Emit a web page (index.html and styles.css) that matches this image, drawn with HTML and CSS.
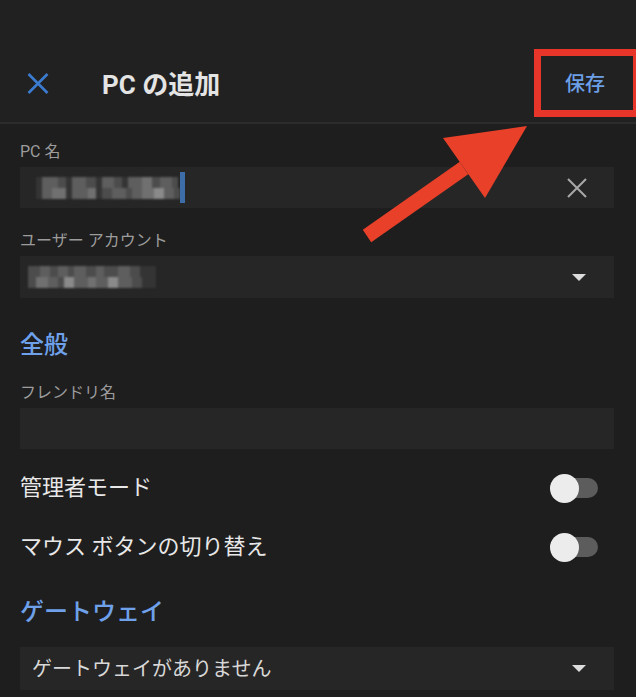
FILE: index.html
```html
<!DOCTYPE html>
<html lang="ja">
<head>
<meta charset="utf-8">
<title>PC の追加</title>
<link rel="stylesheet" href="styles.css">
</head>
<body>
<div class="screen">
  <header class="topbar">
    <button class="close" aria-label="閉じる">
      <svg width="22" height="21" viewBox="0 0 22 21"><path d="M1.5 1 L20.5 20 M20.5 1 L1.5 20" stroke="#3b7bd0" stroke-width="2.6" fill="none"/></svg>
    </button>
    <h1 class="title">PC の追加</h1>
    <button class="save">保存</button>
  </header>

  <main class="form">
    <div class="field first">
      <label class="label">PC 名</label>
      <div class="input">
        <div class="pix">
          <div class="pr">
            <span class="b w6 s1"></span><span class="b w16 s3"></span><span class="b w8 s2"></span><span class="b w6 s1"></span><span class="b w14 s3"></span><span class="b w10 s2"></span><span class="b w6 s1"></span><span class="b w12 s3"></span><span class="b w8 s2"></span><span class="b w6 s1"></span><span class="b w14 s3"></span><span class="b w10 s4"></span><span class="b w8 s2"></span><span class="b w12 s3"></span><span class="b w6 s2"></span>
          </div>
          <div class="pr">
            <span class="b w6 s1"></span><span class="b w10 s3"></span><span class="b w14 s4"></span><span class="b w6 s1"></span><span class="b w16 s3"></span><span class="b w8 s4"></span><span class="b w6 s1"></span><span class="b w10 s2"></span><span class="b w14 s3"></span><span class="b w6 s2"></span><span class="b w10 s3"></span><span class="b w12 s4"></span><span class="b w10 s5"></span><span class="b w10 s3"></span><span class="b w6 s2"></span>
          </div>
        </div>
        <span class="cursor"></span>
        <svg class="clear" width="22" height="22" viewBox="0 0 22 22"><path d="M2 2 L20 20 M20 2 L2 20" stroke="#a8a8a8" stroke-width="2" fill="none"/></svg>
      </div>
    </div>

    <div class="field second">
      <label class="label">ユーザー アカウント</label>
      <div class="input select">
        <div class="pix pix2">
          <div class="pr">
            <span class="b w12 s2"></span><span class="b w10 s3"></span><span class="b w8 s2"></span><span class="b w10 s3"></span><span class="b w6 s2"></span><span class="b w12 s3"></span><span class="b w10 s2"></span><span class="b w8 s3"></span><span class="b w14 s2"></span><span class="b w12 s3"></span><span class="b w10 s2"></span><span class="b w16 s1"></span>
          </div>
          <div class="pr">
            <span class="b w8 s2"></span><span class="b w12 s4"></span><span class="b w10 s3"></span><span class="b w6 s2"></span><span class="b w10 s5"></span><span class="b w14 s3"></span><span class="b w8 s4"></span><span class="b w12 s3"></span><span class="b w10 s5"></span><span class="b w14 s3"></span><span class="b w10 s2"></span><span class="b w14 s1"></span>
          </div>
        </div>
        <span class="caret"></span>
      </div>
    </div>

    <h2 class="section">全般</h2>

    <div class="field tight">
      <label class="label">フレンドリ名</label>
      <div class="input"></div>
    </div>

    <div class="toggles">
      <div class="row">
        <span class="row-text">管理者モード</span>
        <span class="toggle"><span class="track"></span><span class="thumb"></span></span>
      </div>
      <div class="row">
        <span class="row-text">マウス ボタンの切り替え</span>
        <span class="toggle"><span class="track"></span><span class="thumb"></span></span>
      </div>
    </div>

    <h2 class="section gw">ゲートウェイ</h2>

    <div class="input select gw-box">
      <span class="value">ゲートウェイがありません</span>
      <span class="caret"></span>
    </div>
  </main>

  <div class="highlight"></div>
  <svg class="arrow" width="636" height="697" viewBox="0 0 636 697">
    <polygon points="362.8,229.8 459.8,161.8 468.2,174.2 371.2,242.2" fill="#e9402a"/>
    <polygon points="443,138 527,126 485,198" fill="#e9402a"/>
  </svg>
</div>
</body>
</html>
```

FILE: styles.css
```css
* { box-sizing: border-box; }

html, body {
  margin: 0;
  padding: 0;
  background: #1e1e1e;
}

body {
  font-family: Roboto, "Noto Sans CJK JP", sans-serif;
  color: #e6e6e6;
}

.screen {
  position: relative;
  width: 636px;
  height: 697px;
  overflow: hidden;
  background: #1e1e1e;
}

.topbar {
  height: 124px;
  background: #212121;
  border-bottom: 2px solid #2c2c2c;
  display: flex;
  align-items: center;
  padding: 44px 0 0 0;
}

.close {
  background: none;
  border: 0;
  padding: 0;
  margin: 0 0 0 27px;
  width: 22px;
  height: 21px;
  display: flex;
}

.title {
  margin: 4px 0 0 53px;
  font-size: 26px;
  font-weight: 700;
  color: #e4e4e4;
  line-height: 32px;
  flex: 1;
}

.save {
  background: none;
  border: 0;
  padding: 0;
  margin: 0 31px 0 0;
  font-family: "Noto Sans CJK JP", sans-serif;
  font-size: 20px;
  font-weight: 500;
  color: #6c9fe6;
  line-height: 28px;
}

.form {
  padding: 0 22px 0 20px;
}

.field.first { margin-top: 17px; }
.field.second { margin-top: 22px; }
.field.tight { margin-top: 21px; }

.label {
  display: block;
  font-size: 16px;
  line-height: 22px;
  color: #9c9c9c;
  margin-bottom: 4px;
}

.input {
  position: relative;
  height: 41px;
  background: #262626;
  display: flex;
  align-items: center;
}

.select { height: 42px; }

.pix {
  display: flex;
  flex-direction: column;
  margin-left: 16px;
  filter: blur(0.9px);
}

.pr { display: flex; }

.pix2 { margin-left: 8px; }

.b { display: block; height: 11px; }
.w6 { width: 6px; }
.w8 { width: 8px; }
.w10 { width: 10px; }
.w12 { width: 12px; }
.w14 { width: 14px; }
.w16 { width: 16px; }
.s1 { background: #343434; }
.s2 { background: #4c4c4c; }
.s3 { background: #5e5e5e; }
.s4 { background: #707070; }
.s5 { background: #8a8a8a; }

.cursor {
  width: 5px;
  height: 31px;
  background: #3d6ea8;
  margin-left: 0;
  filter: blur(0.5px);
}

.clear {
  margin-left: auto;
  margin-right: 26px;
}

.caret {
  margin-left: auto;
  margin-right: 28px;
  width: 0;
  height: 0;
  border-left: 7px solid transparent;
  border-right: 7px solid transparent;
  border-top: 7px solid #dcdcdc;
}

.section {
  margin: 31px 0 0 0;
  font-size: 24px;
  line-height: 32px;
  font-weight: 500;
  color: #6ea1ea;
}

.toggles { margin-top: 9px; }

.row {
  height: 59px;
  display: flex;
  align-items: center;
  padding-right: 16px;
}

.row-text {
  flex: 1;
  font-size: 22px;
  line-height: 30px;
  color: #e8e8e8;
}

.toggle {
  position: relative;
  width: 48px;
  height: 28px;
  display: flex;
  align-items: center;
}

.track {
  margin-left: 6px;
  width: 42px;
  height: 20px;
  border-radius: 10px;
  background: #5c5c5c;
}

.thumb {
  position: absolute;
  left: 0;
  top: 0;
  width: 29px;
  height: 29px;
  border-radius: 50%;
  background: #ececec;
}

.section.gw { margin-top: 20px; }

.gw-box {
  margin-top: 19px;
  height: 43px;
}

.value {
  margin-left: 12px;
  font-size: 20px;
  color: #d8d8d8;
  line-height: 28px;
}

.highlight {
  position: absolute;
  left: 534px;
  top: 49px;
  width: 106px;
  height: 68px;
  border: 7px solid #e8352a;
}

.arrow {
  position: absolute;
  left: 0;
  top: 0;
  pointer-events: none;
}
```
